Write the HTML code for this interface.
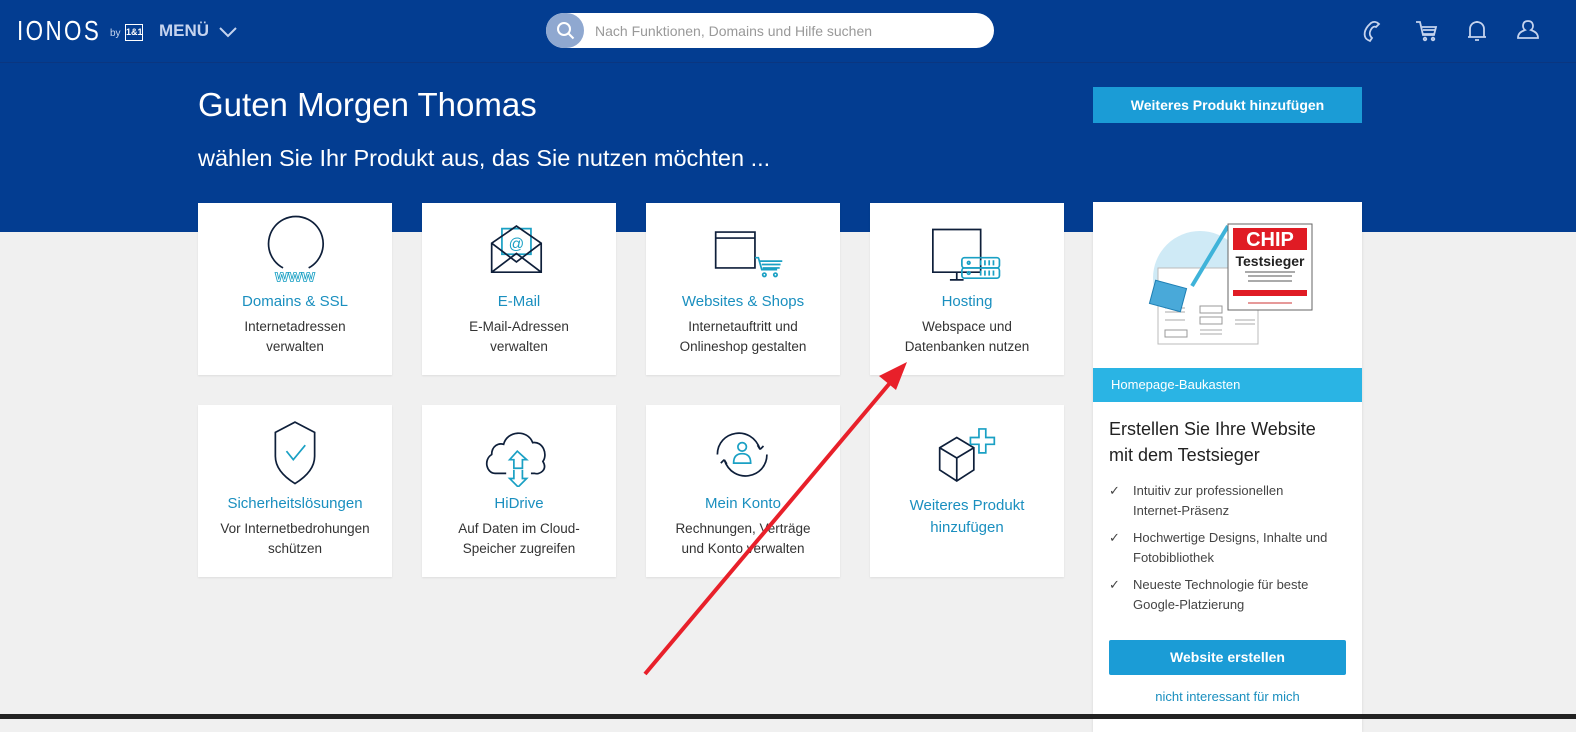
<!DOCTYPE html>
<html><head><meta charset="utf-8"><style>
*{margin:0;padding:0;box-sizing:border-box}
body{width:1576px;height:719px;overflow:hidden;background:#f0f0f0;font-family:"Liberation Sans",sans-serif;position:relative}
.blue{position:absolute;left:0;top:0;width:1576px;height:232px;background:#033d91}
.bar{position:absolute;left:0;top:0;width:1576px;height:63px;border-bottom:1px solid #0a3680}
.abs{position:absolute}
.card{position:absolute;width:194px;height:172px;background:#fff;box-shadow:0 1px 2px rgba(0,0,0,.08);text-align:center}
.card svg{position:absolute;left:54px;top:12px}
.card .t{position:absolute;top:90px;left:0;right:0;color:#1a8fbf;font-size:15px}
.card .d{position:absolute;top:114px;left:0;right:0;color:#333;font-size:13.5px;line-height:20px}
.ic{fill:none;stroke:#0e1f3a;stroke-width:2}
.ib{fill:none;stroke:#1aa0c4;stroke-width:2}
</style></head><body>
<div class="blue"></div>
<div class="bar"></div>
<div class="abs" style="left:17px;top:15px;color:#fff;font-size:28px;letter-spacing:3px;transform:scaleX(.8);transform-origin:left">IONOS</div>
<div class="abs" style="left:110px;top:28px;color:#c8d6ee;font-size:10px">by</div>
<div class="abs" style="left:125px;top:24px;width:18px;height:17px;border:1px solid #fff;color:#fff;font-size:9px;font-weight:bold;text-align:center;line-height:15px">1&amp;1</div>
<div class="abs" style="left:159px;top:21px;color:#c5d3ee;font-size:17px;font-weight:bold">MENÜ</div>
<svg class="abs" style="left:218px;top:25px" width="20" height="14"><path d="M2 3l8 8 8-8" fill="none" stroke="#c5d3ee" stroke-width="2"/></svg>
<div class="abs" style="left:546px;top:13px;width:448px;height:35px;background:#fff;border-radius:18px"></div>
<div class="abs" style="left:546px;top:13px;width:38px;height:35px;background:#8fa8d0;border-radius:18px"></div>
<svg class="abs" style="left:556px;top:21px" width="20" height="20"><circle cx="8" cy="8" r="6" fill="none" stroke="#fff" stroke-width="2"/><path d="M12.5 12.5l5 5" stroke="#fff" stroke-width="2"/></svg>
<div class="abs" style="left:595px;top:23px;color:#999;font-size:14px">Nach Funktionen, Domains und Hilfe suchen</div>
<svg class="abs" style="left:1360px;top:18px" width="180" height="26" fill="none" stroke="#c5d3ee" stroke-width="1.8">
<path d="M8 22c-4-2-5-8 0-14l3-3c3-2 6-1 8 1l-3 3c-2-1-3 0-4 1-3 4-3 7 0 10l-2 3z"/>
<path d="M56 4h4l3 13h11l2-8H62M63 12h12M63 16h12"/><circle cx="65" cy="21" r="1.3"/><circle cx="73" cy="21" r="1.3"/>
<path d="M110 19V11a7 7 0 0 1 14 0v8h2H108zM117 3v2M115 22h4"/>
<path d="M165 12c-3-2-3-9 3-9s6 7 3 9c5 2 7 4 7 8h-20c0-4 2-6 7-8z"/>
</svg>
<div class="abs" style="left:198px;top:86px;color:#fff;font-size:33px">Guten Morgen Thomas</div>
<div class="abs" style="left:198px;top:145px;color:#fff;font-size:23.5px">wählen Sie Ihr Produkt aus, das Sie nutzen möchten ...</div>
<div class="abs" style="left:1093px;top:87px;width:269px;height:36px;background:#1b9cd6;color:#fff;font-size:14px;font-weight:bold;text-align:center;line-height:36px">Weiteres Produkt hinzufügen</div>

<div class="card" style="left:198px;top:203px"><svg width="86" height="70" viewBox="0 0 100 82"><path class="ic" d="M36 62a32 32 0 1 1 30 0"/><text x="50" y="78" text-anchor="middle" font-size="20" font-weight="bold" fill="#fff" stroke="#1aa0c4" stroke-width="1">www</text></svg><div class="t">Domains &amp; SSL</div><div class="d">Internetadressen<br>verwalten</div></div>
<div class="card" style="left:422px;top:203px"><svg width="86" height="70" viewBox="0 0 100 82"><path class="ib" d="M30 16h34v30H30z"/><text x="47" y="40" text-anchor="middle" font-size="18" fill="#1aa0c4">@</text><path class="ic" d="M18 33l29-20 29 20v34H18zM18 33l29 22 29-22M18 67l29-22 29 22"/></svg><div class="t">E-Mail</div><div class="d">E-Mail-Adressen<br>verwalten</div></div>
<div class="card" style="left:646px;top:203px"><svg width="86" height="70" viewBox="0 0 100 82"><path class="ic" d="M18 20h46v42H18zM18 27h46"/><path class="ib" d="M64 50h4l4 14h18M70 54h26M72 58h22M73 62h20"/><circle cx="75" cy="70" r="2" class="ib"/><circle cx="88" cy="70" r="2" class="ib"/></svg><div class="t">Websites &amp; Shops</div><div class="d">Internetauftritt und<br>Onlineshop gestalten</div></div>
<div class="card" style="left:870px;top:203px"><svg width="86" height="70" viewBox="0 0 100 82"><path class="ic" d="M10 17h56v50H10zM38 67v8M30 76h16"/><rect class="ib" x="44" y="50" width="44" height="12" rx="3" fill="#fff"/><rect class="ib" x="44" y="62" width="44" height="12" rx="3" fill="#fff"/><path class="ib" d="M58 56h0M66 53v6M71 53v6M76 53v6M81 53v6M66 65v6M71 65v6M76 65v6M81 65v6"/><circle cx="52" cy="56" r="1.5" class="ib"/><circle cx="52" cy="68" r="1.5" class="ib"/></svg><div class="t">Hosting</div><div class="d">Webspace und<br>Datenbanken nutzen</div></div>

<div class="card" style="left:198px;top:405px"><svg width="86" height="70" viewBox="0 0 100 82"><path class="ic" d="M50 6l23 12v28c0 14-10 24-23 32-13-8-23-18-23-32V18z"/><path class="ib" d="M40 40l8 10 14-17"/></svg><div class="t">Sicherheitslösungen</div><div class="d">Vor Internetbedrohungen<br>schützen</div></div>
<div class="card" style="left:422px;top:405px"><svg width="86" height="70" viewBox="0 0 100 82"><path class="ic" d="M35 66H22c-10 0-14-16-4-22 0-10 8-14 14-12 4-16 28-18 34-2 12-2 18 14 12 22 6 10-4 16-10 14H64"/><path class="ib" d="M48 40l-9 10h5v10h10V50h5zM44 60h10M44 62v10h-5l10 10 10-10h-5V62"/></svg><div class="t">HiDrive</div><div class="d">Auf Daten im Cloud-<br>Speicher zugreifen</div></div>
<div class="card" style="left:646px;top:405px"><svg width="86" height="70" viewBox="0 0 100 82"><path class="ic" d="M20 44c0-28 40-36 50-6M70 38l-3-5M70 38l4-4M78 44c0 28-40 36-50 6M28 50l-4 4M28 50l3 5"/><circle class="ib" cx="49" cy="35" r="5"/><path class="ib" d="M39 54c0-8 4-11 10-11s10 3 10 11z"/></svg><div class="t">Mein Konto</div><div class="d">Rechnungen, Verträge<br>und Konto verwalten</div></div>
<div class="card" style="left:870px;top:405px"><svg width="86" height="70" viewBox="0 0 100 82"><path class="ic" d="M18 36l20-12 20 12v26L38 75 18 62zM18 36l20 12 20-12M38 48v27"/><path class="ib" d="M64 14h8v10h10v8H72v10h-8V32H54v-8h10z"/></svg><div class="t" style="line-height:22px">Weiteres Produkt<br>hinzufügen</div></div>

<div class="abs" style="left:1093px;top:202px;width:269px;height:530px;background:#fff;box-shadow:0 1px 3px rgba(0,0,0,.1)"></div>
<svg class="abs" style="left:1140px;top:220px" width="180" height="130">
<circle cx="60" cy="58" r="47" fill="#cfeaf6"/>
<rect x="18" y="48" width="100" height="76" fill="#fff" stroke="#bbb"/>
<rect x="60" y="86" width="22" height="7" fill="#fff" stroke="#999"/><rect x="60" y="97" width="22" height="7" fill="#fff" stroke="#999"/>
<rect x="25" y="110" width="22" height="7" fill="#fff" stroke="#999"/><path d="M25 88h20M25 92h20M25 100h20M60 110h22M60 114h22M95 100h20M95 104h20" stroke="#aaa"/>
<path d="M88 6L52 66" stroke="#3fb3d9" stroke-width="4"/>
<rect x="12" y="64" width="32" height="24" fill="#49a9d9" stroke="#1e7fb4" transform="rotate(15 28 76)"/>
<rect x="88" y="4" width="84" height="86" fill="#fff" stroke="#666"/>
<rect x="93" y="8" width="74" height="22" fill="#e01b24"/>
<text x="130" y="26" text-anchor="middle" font-size="20" font-weight="bold" fill="#fff">CHIP</text>
<text x="130" y="46" text-anchor="middle" font-size="14" font-weight="bold" fill="#222">Testsieger</text>
<path d="M105 52h50M108 56h44M108 61h44" stroke="#555"/>
<rect x="93" y="70" width="74" height="6" fill="#e01b24"/><path d="M108 83h44" stroke="#c33"/>
</svg>
<div class="abs" style="left:1093px;top:368px;width:269px;height:34px;background:#2ab4e4;color:#fff;font-size:13px;line-height:34px;padding-left:18px">Homepage-Baukasten</div>
<div class="abs" style="left:1109px;top:416px;color:#222;font-size:18px;line-height:26px">Erstellen Sie Ihre Website<br>mit dem Testsieger</div>
<div class="abs" style="left:1109px;top:481px;color:#444;font-size:13px;line-height:20px">
<div style="position:relative;padding-left:24px;margin-bottom:7px"><span style="position:absolute;left:0">✓</span>Intuitiv zur professionellen<br>Internet-Präsenz</div>
<div style="position:relative;padding-left:24px;margin-bottom:7px"><span style="position:absolute;left:0">✓</span>Hochwertige Designs, Inhalte und<br>Fotobibliothek</div>
<div style="position:relative;padding-left:24px"><span style="position:absolute;left:0">✓</span>Neueste Technologie für beste<br>Google-Platzierung</div></div>
<div class="abs" style="left:1109px;top:640px;width:237px;height:35px;background:#1b9cd6;color:#fff;font-size:14px;font-weight:bold;text-align:center;line-height:35px;border-radius:2px">Website erstellen</div>
<div class="abs" style="left:1093px;top:689px;width:269px;text-align:center;color:#1a8fbf;font-size:13px">nicht interessant für mich</div>
<div class="abs" style="left:0;top:714px;width:1576px;height:5px;background:#222"></div>
<svg class="abs" style="left:0;top:0" width="1576" height="719"><path d="M645 674L895 377" stroke="#e8202a" stroke-width="4"/><path d="M907 362l-28 14 17 14z" fill="#e8202a"/></svg>
</body></html>
